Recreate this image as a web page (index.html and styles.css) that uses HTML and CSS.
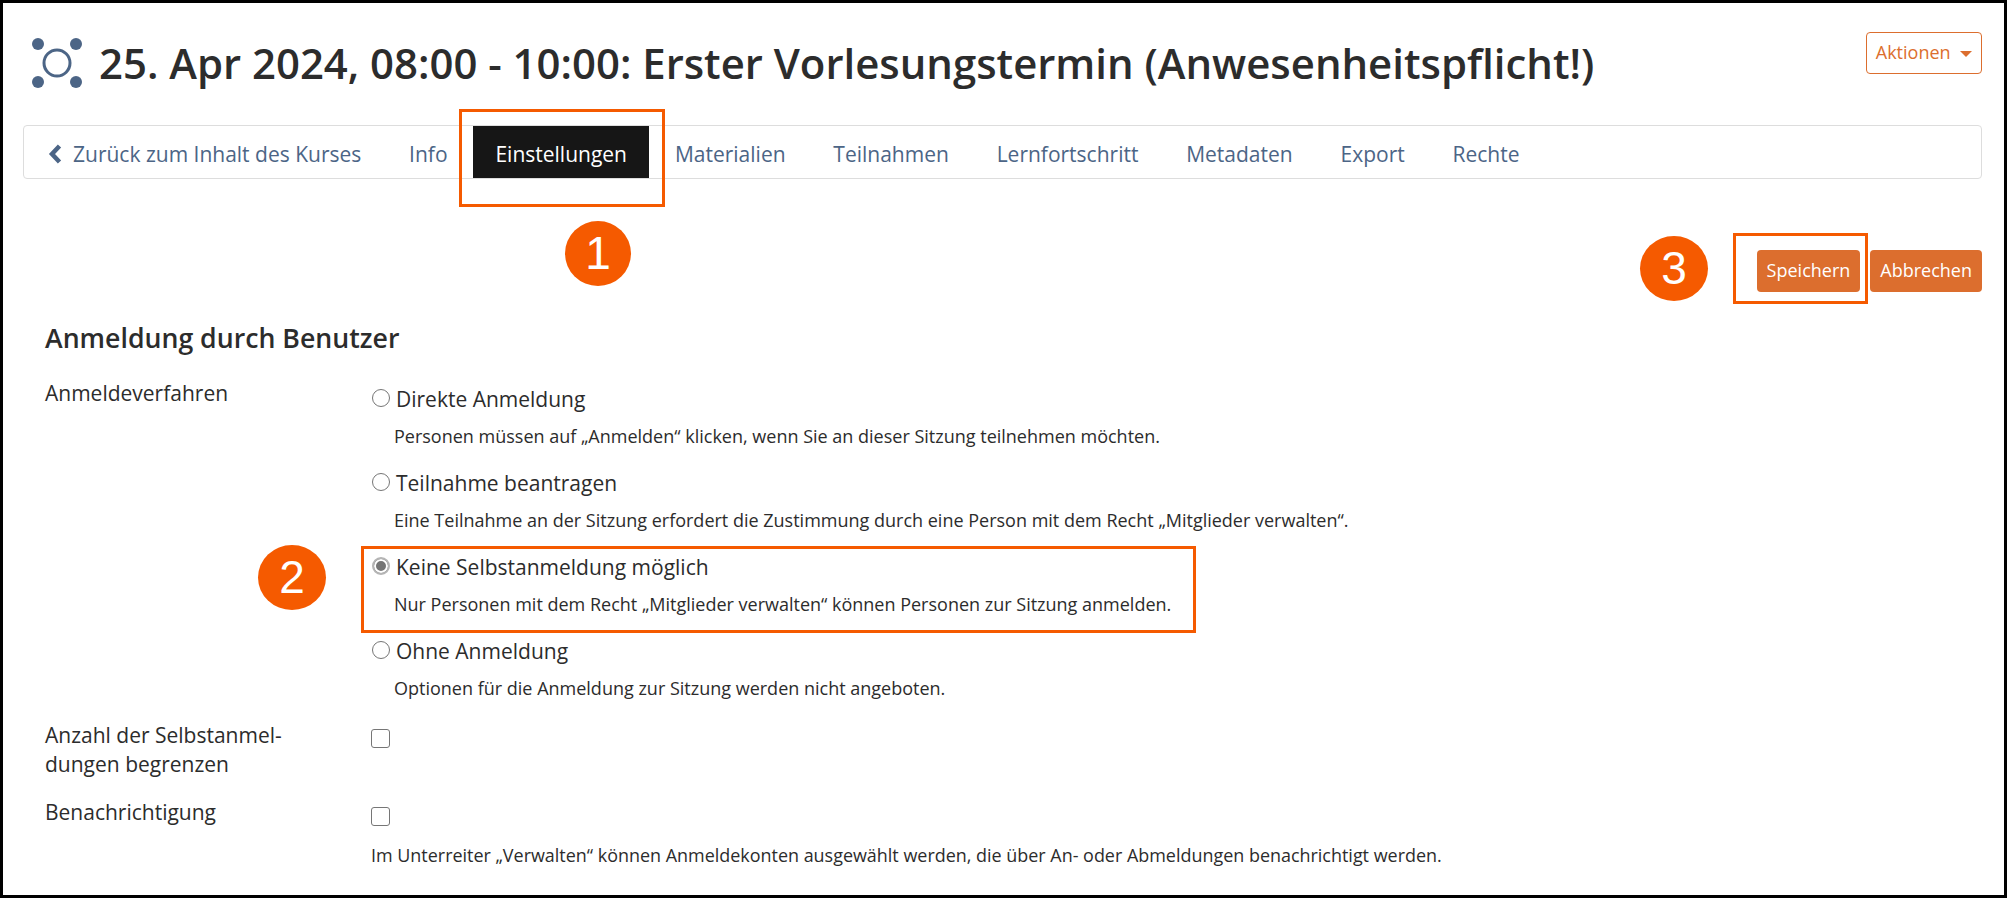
FILE: index.html
```html
<!DOCTYPE html>
<html>
<head>
    <title>Erster Vorlesungstermin</title>
    <link rel="stylesheet" href="styles.css">
</head>
<body>
    <div class="frame">
        <header class="page-head">
            <svg class="head-icon" width="52" height="52" viewBox="0 0 52 52">
                <circle cx="7" cy="7" r="6" fill="#4c6586"/>
                <circle cx="45" cy="7" r="6" fill="#4c6586"/>
                <circle cx="7" cy="45" r="6" fill="#4c6586"/>
                <circle cx="45" cy="45" r="6" fill="#4c6586"/>
                <circle cx="26" cy="26" r="13" fill="none" stroke="#4c6586" stroke-width="3"/>
            </svg>
            <h1>25. Apr 2024, 08:00 - 10:00: Erster Vorlesungstermin (Anwesenheitspflicht!)</h1>
            <button class="actions" type="button">Aktionen <span class="caret"></span></button>
        </header>

        <nav class="tabs">
            <a class="tab back" href="#">
                <svg width="15" height="20" viewBox="0 0 15 20"><path d="M11.5 2 L4 10 L11.5 18" fill="none" stroke="#4c6586" stroke-width="4.5"/></svg>
                Zurück zum Inhalt des Kurses
            </a>
            <a class="tab" href="#">Info</a>
            <a class="tab active" href="#">Einstellungen</a>
            <a class="tab" href="#">Materialien</a>
            <a class="tab" href="#">Teilnahmen</a>
            <a class="tab" href="#">Lernfortschritt</a>
            <a class="tab" href="#">Metadaten</a>
            <a class="tab" href="#">Export</a>
            <a class="tab" href="#">Rechte</a>
        </nav>

        <div class="toolbar">
            <button class="btn" type="button">Speichern</button>
            <button class="btn" type="button">Abbrechen</button>
        </div>

        <form class="settings">
            <h2>Anmeldung durch Benutzer</h2>

            <div class="row row-method">
                <label class="row-label">Anmeldeverfahren</label>
                <div class="row-field options">
                    <div class="option">
                        <label class="option-title"><input type="radio" name="reg"> Direkte Anmeldung</label>
                        <p>Personen müssen auf „Anmelden“ klicken, wenn Sie an dieser Sitzung teilnehmen möchten.</p>
                    </div>
                    <div class="option">
                        <label class="option-title"><input type="radio" name="reg"> Teilnahme beantragen</label>
                        <p>Eine Teilnahme an der Sitzung erfordert die Zustimmung durch eine Person mit dem Recht „Mitglieder verwalten“.</p>
                    </div>
                    <div class="option">
                        <label class="option-title"><input type="radio" name="reg" checked> Keine Selbstanmeldung möglich</label>
                        <p>Nur Personen mit dem Recht „Mitglieder verwalten“ können Personen zur Sitzung anmelden.</p>
                    </div>
                    <div class="option">
                        <label class="option-title"><input type="radio" name="reg"> Ohne Anmeldung</label>
                        <p>Optionen für die Anmeldung zur Sitzung werden nicht angeboten.</p>
                    </div>
                </div>
            </div>

            <div class="row row-limit">
                <label class="row-label">Anzahl der Selbstanmel-<br>dungen begrenzen</label>
                <div class="row-field"><input type="checkbox"></div>
            </div>

            <div class="row row-notify">
                <label class="row-label">Benachrichtigung</label>
                <div class="row-field">
                    <input type="checkbox">
                    <p class="hint">Im Unterreiter „Verwalten“ können Anmeldekonten ausgewählt werden, die über An- oder Abmeldungen benachrichtigt werden.</p>
                </div>
            </div>
        </form>

        <!-- annotations on top of the screenshot -->
        <div class="mark mark-tab"></div>
        <div class="mark mark-option"></div>
        <div class="mark mark-save"></div>
        <div class="badge badge-1">1</div>
        <div class="badge badge-2">2</div>
        <div class="badge badge-3">3</div>
    </div>
</body>
</html>
```

FILE: styles.css
```css
* {
    box-sizing: border-box;
}
html, body {
    margin: 0;
    padding: 0;
}
body {
    font-family: "Open Sans", Arial, sans-serif;
    color: #2c2c2c;
    background-color: #fff;
}
.frame {
    position: relative;
    width: 2007px;
    height: 898px;
    border: 3px solid #000;
    padding: 0 22px 0 20px;
    overflow: hidden;
}
.page-head {
    display: flex;
    align-items: flex-start;
    height: 122px;
    padding-top: 29px;
}
.head-icon {
    margin: 5px 0 0 8px;
    flex: none;
}
h1 {
    margin: 0 0 0 16px;
    font-size: 41.9px;
    line-height: 62px;
    font-weight: 600;
    white-space: nowrap;
    flex: 1;
}
.actions {
    flex: none;
    width: 116px;
    height: 42px;
    border: 1px solid #dc6e2e;
    border-radius: 4px;
    background-color: #fff;
    color: #dc6e2e;
    font-family: "Open Sans", Arial, sans-serif;
    font-size: 18px;
    padding: 0 0 2px 0;
}
.caret {
    display: inline-block;
    margin-left: 5px;
    vertical-align: middle;
    border-top: 6px solid #dc6e2e;
    border-left: 6px solid transparent;
    border-right: 6px solid transparent;
}
.tabs {
    display: flex;
    align-items: stretch;
    height: 54px;
    border: 1px solid #ddd;
    border-radius: 4px;
    padding-left: 24px;
}
.tab {
    display: flex;
    align-items: center;
    padding: 4px 23.9px 0;
    font-size: 21px;
    color: #4c6586;
    text-decoration: none;
    white-space: nowrap;
}
.back {
    padding-left: 0;
}
.back svg {
    margin-right: 10px;
}
.active {
    background-color: #161616;
    color: #fff;
    padding: 4px 22px 0;
    margin: 0 2px;
}
.toolbar {
    display: flex;
    justify-content: flex-end;
    gap: 10px;
    margin-top: 71px;
}
.btn {
    height: 42px;
    padding: 0 10px 2px;
    border: none;
    border-radius: 4px;
    background-color: #dc6e2e;
    color: #fff;
    font-family: "Open Sans", Arial, sans-serif;
    font-size: 18px;
}
.settings {
    padding-left: 22px;
}
h2 {
    margin: 26px 0 0 0;
    font-size: 26.7px;
    line-height: 40px;
    font-weight: 600;
}
.row {
    display: grid;
    grid-template-columns: 326px 1fr;
}
.row-method {
    margin-top: 21px;
}
.row-label {
    font-size: 21px;
    line-height: 29px;
}
.options {
    margin-top: 5px;
}
.option {
    height: 84px;
}
.option-title {
    display: flex;
    align-items: center;
    font-size: 21px;
    line-height: 30px;
}
.option p {
    margin: 10px 0 0 23px;
    font-size: 18px;
    line-height: 24px;
    white-space: nowrap;
}
input[type="radio"] {
    appearance: none;
    width: 18px;
    height: 18px;
    margin: 0 6px 2px 1px;
    border: 1px solid #767676;
    border-radius: 50%;
    background-color: #fff;
}
input[type="radio"]:checked {
    border: 2px solid #b5b5b5;
    background-color: #757575;
    box-shadow: inset 0 0 0 2px #fff;
}
input[type="checkbox"] {
    appearance: none;
    display: block;
    width: 19px;
    height: 19px;
    margin: 0;
    border: 1px solid #767676;
    border-radius: 3px;
    background-color: #fff;
}
.row-limit {
    margin-top: 1px;
    height: 77px;
}
.row-limit .row-field {
    padding-top: 8px;
}
.row-notify .row-field {
    padding-top: 9px;
}
.hint {
    margin: 17px 0 0 0;
    font-size: 17.95px;
    line-height: 24px;
    white-space: nowrap;
}
.mark {
    position: absolute;
    border: 3px solid #f55a00;
}
.mark-tab {
    left: 456px;
    top: 106px;
    width: 206px;
    height: 98px;
}
.mark-option {
    left: 358px;
    top: 543px;
    width: 835px;
    height: 87px;
}
.mark-save {
    left: 1730px;
    top: 230px;
    width: 135px;
    height: 71px;
}
.badge {
    position: absolute;
    width: 66px;
    height: 65px;
    border-radius: 50%;
    background-color: #f55a00;
    color: #fff;
    font-family: "Liberation Sans", Arial, sans-serif;
    font-size: 46px;
    line-height: 65px;
    text-align: center;
}
.badge-1 {
    left: 562px;
    top: 218px;
}
.badge-2 {
    left: 255px;
    top: 542px;
    width: 68px;
}
.badge-3 {
    left: 1637px;
    top: 233px;
    width: 68px;
}
```
